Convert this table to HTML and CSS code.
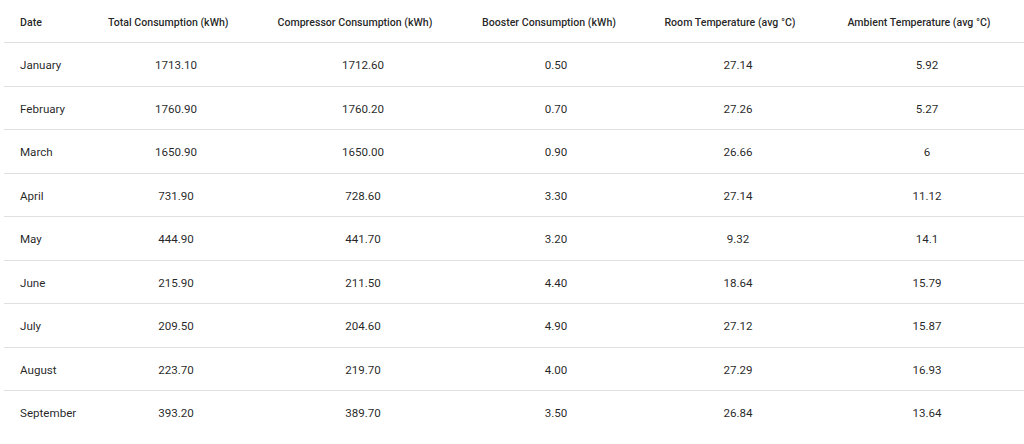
FILE: index.html
```html
<!DOCTYPE html>
<html lang="en">
<head>
<meta charset="utf-8">
<title>Monthly Consumption</title>
<link rel="stylesheet" href="styles.css">
</head>
<body>
<div class="wrap">
<table class="data-table">
  <colgroup>
    <col class="c-date">
    <col class="c-total">
    <col class="c-comp">
    <col class="c-boost">
    <col class="c-room">
    <col class="c-amb">
  </colgroup>
  <thead>
    <tr>
      <th class="left">Date</th>
      <th>Total Consumption (kWh)</th>
      <th>Compressor Consumption (kWh)</th>
      <th>Booster Consumption (kWh)</th>
      <th>Room Temperature (avg °C)</th>
      <th>Ambient Temperature (avg °C)</th>
    </tr>
  </thead>
  <tbody>
    <tr><td class="left">January</td><td>1713.10</td><td>1712.60</td><td>0.50</td><td>27.14</td><td>5.92</td></tr>
    <tr><td class="left">February</td><td>1760.90</td><td>1760.20</td><td>0.70</td><td>27.26</td><td>5.27</td></tr>
    <tr><td class="left">March</td><td>1650.90</td><td>1650.00</td><td>0.90</td><td>26.66</td><td>6</td></tr>
    <tr><td class="left">April</td><td>731.90</td><td>728.60</td><td>3.30</td><td>27.14</td><td>11.12</td></tr>
    <tr><td class="left">May</td><td>444.90</td><td>441.70</td><td>3.20</td><td>9.32</td><td>14.1</td></tr>
    <tr><td class="left">June</td><td>215.90</td><td>211.50</td><td>4.40</td><td>18.64</td><td>15.79</td></tr>
    <tr><td class="left">July</td><td>209.50</td><td>204.60</td><td>4.90</td><td>27.12</td><td>15.87</td></tr>
    <tr><td class="left">August</td><td>223.70</td><td>219.70</td><td>4.00</td><td>27.29</td><td>16.93</td></tr>
    <tr><td class="left">September</td><td>393.20</td><td>389.70</td><td>3.50</td><td>26.84</td><td>13.64</td></tr>
  </tbody>
</table>
</div>
</body>
</html>
```

FILE: styles.css
```css
html, body {
  margin: 0;
  padding: 0;
  background: #ffffff;
}

body {
  font-family: Roboto, "Liberation Sans", Arial, sans-serif;
  color: rgba(0, 0, 0, 0.87);
  overflow: hidden;
}

.wrap {
  padding-left: 4px;
}

.data-table {
  width: 1020px;
  border-collapse: collapse;
  border-spacing: 0;
  table-layout: fixed;
}

.c-date { width: 88px; }
.c-total { width: 168px; }
.c-comp { width: 206px; }
.c-boost { width: 180px; }
.c-room { width: 184px; }
.c-amb { width: 194px; }

.data-table th,
.data-table td {
  text-align: center;
  border-bottom: 1px solid rgb(224, 224, 224);
  white-space: nowrap;
}

.data-table th {
  padding: 14px 32px 11px 16px;
  font-size: 10.6px;
  line-height: 17px;
  height: 17px;
  font-weight: 500;
}

.data-table td {
  padding: 13px 16px 11px 16px;
  font-size: 11.6px;
  line-height: 18.5px;
  height: 18.5px;
  font-weight: 400;
}

.data-table .left {
  text-align: left;
  padding-right: 16px;
}

.data-table tbody tr:last-child td {
  border-bottom: 0;
}
```
